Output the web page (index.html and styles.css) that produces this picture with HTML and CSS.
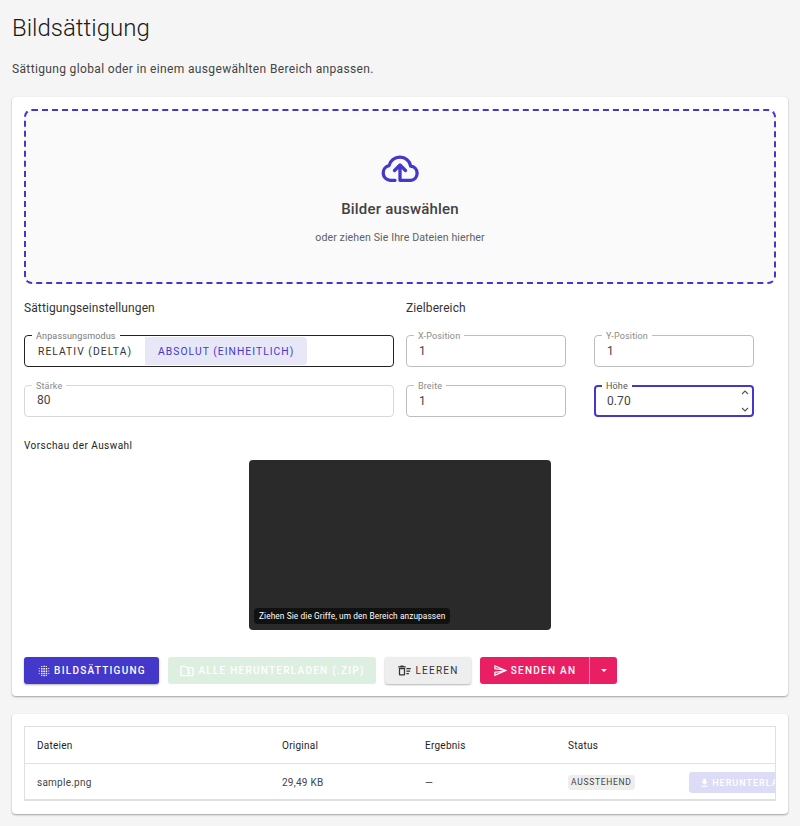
FILE: index.html
```html
<!DOCTYPE html>
<html lang="de">
<head>
<meta charset="utf-8">
<title>Bildsättigung</title>
<link rel="stylesheet" href="styles.css">
</head>
<body>
<h1 class="title">Bildsättigung</h1>
<p class="subtitle">Sättigung global oder in einem ausgewählten Bereich anpassen.</p>
<section class="card main-card">
  <div class="dropzone">
    <svg class="cloud" viewBox="0 0 38 28" width="38" height="28"><path fill="none" stroke="#4338ca" stroke-width="3.300" stroke-linecap="round" stroke-linejoin="round" d="M14 26.300H9A7.400 7.400 0 0 1 8 11.700A11 10.500 0 0 1 29.700 12.200A7.100 7.100 0 0 1 30 26.300H19V11M13.500 16.500L19 11L24.500 16.500"/></svg>
    <div class="drop-title">Bilder auswählen</div>
    <div class="drop-sub">oder ziehen Sie Ihre Dateien hierher</div>
  </div>
  <div class="settings">
    <div class="col-left">
      <div class="section-title">Sättigungseinstellungen</div>
      <div class="field toggle-field">
        <span class="legend legend-dark">Anpassungsmodus</span>
        <span class="toggle">RELATIV (DELTA)</span>
        <span class="toggle toggle-on">ABSOLUT (EINHEITLICH)</span>
      </div>
      <div class="field strength">
        <span class="legend">Stärke</span>
        <span class="value">80</span>
      </div>
    </div>
    <div class="col-right">
      <div class="section-title">Zielbereich</div>
      <div class="pos-grid">
        <div class="field num"><span class="legend">X-Position</span><span class="value">1</span></div>
        <div class="field num"><span class="legend">Y-Position</span><span class="value">1</span></div>
        <div class="field num"><span class="legend">Breite</span><span class="value">1</span></div>
        <div class="field num focused"><span class="legend legend-focus">Höhe</span><span class="value">0.70</span>
          <svg class="spin spin-up" viewBox="0 0 8 5" width="8" height="5"><path d="M1 4l3-3 3 3" fill="none" stroke="#555" stroke-width="1.100"/></svg>
          <svg class="spin spin-down" viewBox="0 0 8 5" width="8" height="5"><path d="M1 1l3 3 3-3" fill="none" stroke="#555" stroke-width="1.100"/></svg>
        </div>
      </div>
    </div>
  </div>
  <div class="preview-label">Vorschau der Auswahl</div>
  <div class="preview-wrap">
    <div class="preview"><span class="hint">Ziehen Sie die Griffe, um den Bereich anzupassen</span></div>
  </div>
  <div class="actions">
    <button class="btn btn-primary">
      <svg viewBox="0 0 24 24" width="14" height="14" fill="#fff"><path d="M3 11h2v2H3zM3 7h1.500v1.500H3zM3 15.500h1.500V17H3zM7 7h2.500v2.500H7zM7 11h2.500v2.500H7zM7 15h2.500v2.500H7zM11 3h2.500v2H11zM11 7h2.500v2.500H11zM11 11h2.500v2.500H11zM11 15h2.500v2.500H11zM11 19h2.500v2H11zM15 7h2.500v2.500H15zM15 11h2.500v2.500H15zM15 15h2.500v2.500H15zM19.500 7H21v1.500h-1.500zM19.500 11H21v2h-1.500zM19.500 15.500H21V17h-1.500zM7 3.500h2V5H7zM15 3.500h2V5h-2zM7 19h2v1.500H7zM15 19h2v1.500h-2z"/></svg>
      BILDSÄTTIGUNG
    </button>
    <button class="btn btn-zip">
      <svg viewBox="0 0 24 24" width="16" height="16" fill="#fff"><path d="M20 6h-8l-2-2H4c-1.100 0-2 .9-2 2v12c0 1.100.9 2 2 2h16c1.100 0 2-.9 2-2V8c0-1.100-.9-2-2-2zm-5 12V16h2v-2h-2v-2h2v-2h-2V8h5v10h-5zM4 18V6h5.200l2 2H13v10H4z"/></svg>
      ALLE HERUNTERLADEN (.ZIP)
    </button>
    <button class="btn btn-clear">
      <svg viewBox="0 0 24 24" width="15" height="15" fill="#333"><path d="M15 16h4v2h-4zM15 8h7v2h-7zM15 12h6v2h-6zM3 18c0 1.100.9 2 2 2h6c1.100 0 2-.9 2-2V8H3v10zM5 10h6v8H5zM10 4H6L5 5H2v2h12V5h-3z"/></svg>
      LEEREN
    </button>
    <div class="split">
      <button class="btn btn-send">
        <svg viewBox="0 0 24 24" width="15" height="15" fill="#fff"><path d="M4 6.030l7.510 3.220-7.520-1 .010-2.220m7.500 8.720L4 17.970v-2.220l7.500-1M2.010 3 2 10l15 2-15 2 .010 7L23 12 2.010 3z"/></svg>
        SENDEN AN
      </button>
      <button class="btn btn-caret"><span class="caret"></span></button>
    </div>
  </div>
</section>
<section class="card table-card">
  <div class="table-wrap">
    <div class="row row-head">
      <span class="c-file">Dateien</span>
      <span class="c-orig">Original</span>
      <span class="c-res">Ergebnis</span>
      <span class="c-status">Status</span>
    </div>
    <div class="row row-body">
      <span class="c-file">sample.png</span>
      <span class="c-orig">29,49 KB</span>
      <span class="c-res">—</span>
      <span class="c-status"><span class="chip">AUSSTEHEND</span></span>
      <span class="dl">
        <svg viewBox="0 0 24 24" width="12" height="12" fill="#fff"><path d="M5 20h14v-2H5v2zM19 9h-4V3H9v6H5l7 7 7-7z"/></svg>
        HERUNTERLADEN
      </span>
    </div>
  </div>
</section>
</body>
</html>
```
FILE: styles.css
```css
* { box-sizing: border-box; }
html, body { margin: 0; padding: 0; }
body {
  width: 800px;
  height: 826px;
  overflow: hidden;
  background: #f5f5f5;
  font-family: Roboto, "Liberation Sans", sans-serif;
  color: #212121;
  padding: 12px 12px 0;
}
.title {
  margin: 0;
  font-size: 24px;
  font-weight: 300;
  line-height: 32px;
  letter-spacing: 0;
  color: #1a1a1a;
}
.subtitle {
  margin: 17px 0 0;
  font-size: 12px;
  line-height: 16px;
  letter-spacing: 0.35px;
  color: #444;
}
.card {
  background: #fff;
  border-radius: 4px;
  box-shadow: 0 1px 2px rgba(0,0,0,.35);
}
.main-card {
  margin-top: 20px;
  height: 599px;
  padding: 12px;
}
.dropzone {
  height: 175px;
  border: 2px dashed #4338ca;
  border-radius: 8px;
  background: #fafafb;
  display: flex;
  flex-direction: column;
  align-items: center;
  padding-top: 43px;
}
.cloud { display: block; }
.drop-title {
  margin-top: 17px;
  font-size: 15px;
  font-weight: 500;
  line-height: 20px;
  letter-spacing: 0.2px;
  color: #424242;
}
.drop-sub {
  margin-top: 12px;
  font-size: 10.600px;
  line-height: 14px;
  letter-spacing: 0.1px;
  color: #616161;
}
.settings {
  display: flex;
  gap: 12px;
  margin-top: 16px;
}
.col-left { width: 370px; }
.col-right { width: 370px; }
.section-title {
  font-size: 12px;
  line-height: 16px;
  letter-spacing: 0.1px;
  color: #333;
}
.field {
  position: relative;
  border: 1px solid #bdbdbd;
  border-radius: 4px;
  height: 32px;
  display: flex;
  align-items: center;
}
.legend {
  position: absolute;
  top: -5px;
  left: 7px;
  padding: 0 4px;
  background: #fff;
  font-size: 9px;
  line-height: 10px;
  letter-spacing: 0.15px;
  color: #8a8a8a;
}
.legend-dark { color: #777; }
.legend-focus { color: #555; }
.toggle-field {
  margin-top: 19px;
  border-color: #222;
  align-items: stretch;
  padding: 1px 0;
}
.toggle {
  display: flex;
  align-items: center;
  padding: 0 13px;
  font-size: 10.300px;
  font-weight: 400;
  letter-spacing: 1.050px;
  color: #333;
}
.toggle-on {
  background: #e8e7f8;
  color: #4338ca;
  border-radius: 0 4px 4px 0;
}
.strength { margin-top: 18px; border-color: #d8d8d8; padding: 0 0 2px 12px; }
.value {
  font-size: 12px;
  letter-spacing: 0.1px;
  color: #444;
}
.pos-grid {
  display: grid;
  grid-template-columns: 160px 160px;
  column-gap: 28px;
  row-gap: 18px;
  margin-top: 19px;
}
.num { padding-left: 12px; }
.focused { border: 2px solid #4338ca; padding-left: 11px; }
.focused .legend { top: -6px; left: 6px; }
.spin { position: absolute; right: 3px; }
.spin-up { top: 3px; }
.spin-down { bottom: 3px; }
.preview-label {
  margin-top: 22px;
  font-size: 10px;
  line-height: 14px;
  letter-spacing: 0.45px;
  color: #222;
}
.preview-wrap {
  display: flex;
  justify-content: center;
  margin-top: 7px;
}
.preview {
  position: relative;
  width: 302px;
  height: 170px;
  background: #2a2a2a;
  border-radius: 4px;
}
.hint {
  position: absolute;
  left: 5px;
  bottom: 6px;
  padding: 0 5px;
  height: 16px;
  line-height: 16px;
  border-radius: 4px;
  background: #111;
  color: #fff;
  font-size: 8.300px;
  letter-spacing: 0.1px;
  white-space: nowrap;
}
.actions {
  display: flex;
  gap: 9px;
  margin-top: 27px;
  align-items: center;
}
.btn {
  height: 27px;
  border: 0;
  border-radius: 3px;
  font-family: inherit;
  font-size: 10px;
  font-weight: 500;
  letter-spacing: 1.250px;
  display: inline-flex;
  align-items: center;
  justify-content: center;
  gap: 3px;
  padding: 0;
  white-space: nowrap;
}
.btn-primary { width: 135px; background: #4338ca; color: #fff; box-shadow: 0 1px 2px rgba(0,0,0,.3); }
.btn-zip { width: 208px; background: #dcefe0; color: #fff; }
.btn-clear { width: 86px; background: #eee; color: #333; box-shadow: 0 1px 2px rgba(0,0,0,.3); font-weight: 400; }
.split { display: flex; }
.btn-send { width: 110px; background: #e91e63; color: #fff; border-radius: 3px 0 0 3px; border-right: 1px solid #f48fb1; }
.btn-caret { width: 27px; background: #e91e63; border-radius: 0 3px 3px 0; }
.caret { width: 0; height: 0; border-left: 3.500px solid transparent; border-right: 3.500px solid transparent; border-top: 3.500px solid #fff; }
.table-card {
  margin-top: 18px;
  height: 100px;
  padding: 12px;
}
.table-wrap {
  position: relative;
  height: 75px;
  border: 1px solid #e0e0e0;
  border-bottom-width: 2px;
  overflow: hidden;
  font-size: 10px;
}
.row { position: relative; display: flex; align-items: center; }
.row-head { height: 37px; border-bottom: 1px solid #e0e0e0; color: #222; letter-spacing: 0.25px; }
.row-body { height: 36px; color: #444; letter-spacing: 0.25px; }
.c-file { margin-left: 12px; width: 245px; }
.c-orig { width: 143px; }
.c-res { width: 143px; }
.c-status { width: 120px; }
.chip {
  display: inline-block;
  padding: 0 3px;
  height: 15px;
  line-height: 15px;
  border-radius: 3px;
  background: #eee;
  font-size: 8.500px;
  font-weight: 400;
  letter-spacing: 0.7px;
  color: #444;
}
.dl {
  position: absolute;
  left: 664px;
  top: 8px;
  width: 110px;
  height: 21px;
  border-radius: 3px;
  background: #dddcf6;
  color: #fff;
  font-size: 9px;
  font-weight: 500;
  letter-spacing: 1px;
  display: flex;
  align-items: center;
  gap: 2px;
  padding-left: 10px;
  white-space: nowrap;
}
```
